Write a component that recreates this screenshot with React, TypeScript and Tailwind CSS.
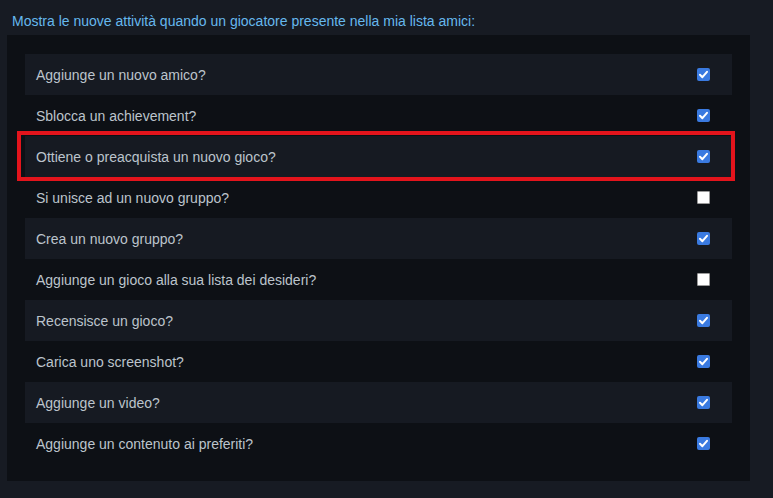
import React from "react";

const rows: [string, boolean][] = [
  ["Aggiunge un nuovo amico?", true],
  ["Sblocca un achievement?", true],
  ["Ottiene o preacquista un nuovo gioco?", true],
  ["Si unisce ad un nuovo gruppo?", false],
  ["Crea un nuovo gruppo?", true],
  ["Aggiunge un gioco alla sua lista dei desideri?", false],
  ["Recensisce un gioco?", true],
  ["Carica uno screenshot?", true],
  ["Aggiunge un video?", true],
  ["Aggiunge un contenuto ai preferiti?", true],
];

function Box({ checked }: { checked: boolean }) {
  if (!checked)
    return <div className="w-[13px] h-[13px] bg-white border border-[#9a9a9a] rounded-[1px]" />;
  return (
    <div className="w-[13px] h-[13px] bg-[#3a7ae0] rounded-[2px] flex items-center justify-center">
      <svg width="11" height="11" viewBox="0 0 11 11">
        <path d="M2 5.8 L4.4 8.2 L9 2.8" stroke="white" strokeWidth="2" fill="none" strokeLinecap="round" strokeLinejoin="round" />
      </svg>
    </div>
  );
}

export default function App() {
  return (
    <div
      className="relative w-[773px] h-[498px] bg-[#171b23] overflow-hidden"
      style={{ fontFamily: '"Liberation Sans", Arial, sans-serif' }}
    >
      <div className="h-[35px] pl-[12px] pt-[13px] text-[14px] leading-[16px] text-[#66b8ee]">
        Mostra le nuove attività quando un giocatore presente nella mia lista amici:
      </div>
      <div className="ml-[7px] w-[743px] bg-[#0d1015] pt-[19px] pb-[17px] px-[18px]">
        {rows.map(([label, checked], i) => (
          <div
            key={i}
            className={`h-[41px] flex items-center justify-between pl-[11px] pr-[22px] ${
              i % 2 === 0 ? "bg-[#161a22]" : ""
            }`}
          >
            <span className="text-[14px] text-[#bcc4cc] pt-[1px]">{label}</span>
            <Box checked={checked} />
          </div>
        ))}
      </div>
      <div className="absolute left-[17px] top-[131px] w-[718px] h-[50px] border-[4px] border-[#e3141c] pointer-events-none" />
    </div>
  );
}
